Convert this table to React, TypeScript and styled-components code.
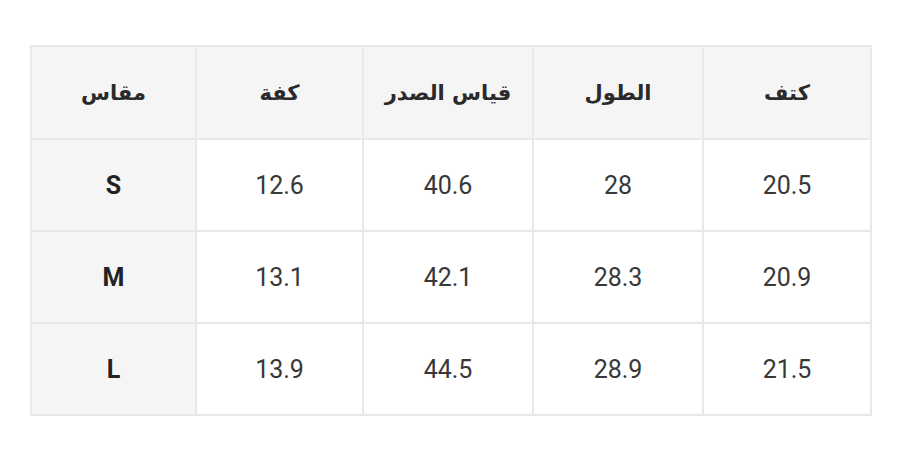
import { FC } from 'react';
import styled, { createGlobalStyle } from 'styled-components';

const GlobalStyle = createGlobalStyle`
    html, body {
        margin: 0;
        padding: 0;
        background: #ffffff;
    }
    body {
        font-family: Roboto, "DejaVu Sans", sans-serif;
    }
`;

const Page = styled.div`
    width: 900px;
    height: 464px;
    padding: 45px 30px 0;
    box-sizing: border-box;
    background: #ffffff;
`;

const SizeTable = styled.table`
    width: 840px;
    border-collapse: collapse;
    table-layout: fixed;
    border: 2px solid #e8e8e8;
`;

const Col = styled.col<{ $w: number }>`
    width: ${(p) => p.$w}px;
`;

const HeadCell = styled.th`
    height: 91px;
    padding: 0;
    border: 2px solid #e8e8e8;
    background: #f5f5f5;
    color: #2a2a2a;
    font-family: "DejaVu Sans", "Noto Sans", sans-serif;
    font-size: 21px;
    font-weight: 700;
    text-align: center;
    vertical-align: middle;
`;

const Cell = styled.td<{ $label?: boolean }>`
    height: 90px;
    padding: 0;
    border: 2px solid #e8e8e8;
    background: ${(p) => (p.$label ? '#f5f5f5' : '#ffffff')};
    color: ${(p) => (p.$label ? '#222222' : '#383838')};
    font-family: Roboto, sans-serif;
    font-size: 25px;
    font-weight: ${(p) => (p.$label ? 700 : 400)};
    text-align: center;
    vertical-align: middle;
`;

const widths = [165, 167, 170, 170, 168];

const headers = ['مقاس', 'كفة', 'قياس الصدر', 'الطول', 'كتف'];

const rows = [
    ['S', '12.6', '40.6', '28', '20.5'],
    ['M', '13.1', '42.1', '28.3', '20.9'],
    ['L', '13.9', '44.5', '28.9', '21.5'],
];

const SizeRow: FC<{ values: string[] }> = ({ values }) => (
    <tr>
        {values.map((v, i) => (
            <Cell key={i} $label={i === 0}>
                {v}
            </Cell>
        ))}
    </tr>
);

export default function App() {
    return (
        <Page>
            <GlobalStyle />
            <SizeTable>
                <colgroup>
                    {widths.map((w, i) => (
                        <Col key={i} $w={w} />
                    ))}
                </colgroup>
                <thead>
                    <tr>
                        {headers.map((h) => (
                            <HeadCell key={h}>{h}</HeadCell>
                        ))}
                    </tr>
                </thead>
                <tbody>
                    {rows.map((r) => (
                        <SizeRow key={r[0]} values={r} />
                    ))}
                </tbody>
            </SizeTable>
        </Page>
    );
}
